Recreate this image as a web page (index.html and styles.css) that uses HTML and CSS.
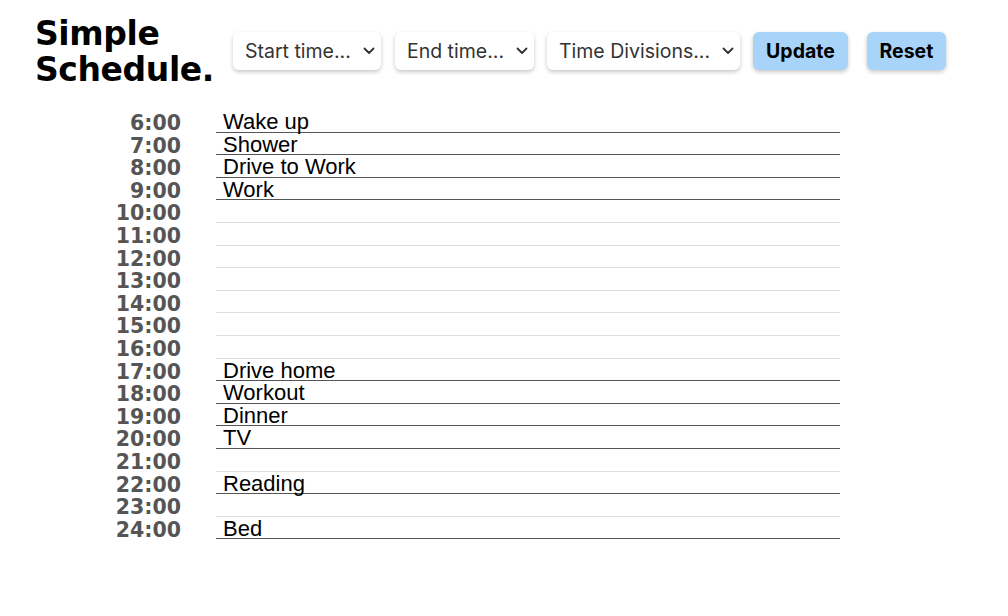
FILE: index.html
```html
<!DOCTYPE html>
<html lang="en">
<head>
<meta charset="utf-8">
<title>Simple Schedule</title>
<link rel="stylesheet" href="styles.css">
</head>
<body>
<header class="header">
  <h1 class="title">Simple<br>Schedule.</h1>
  <div class="controls">
    <button class="select select-start" type="button"><span>Start time...</span><svg class="chev" viewBox="0 0 12 8" width="12" height="8"><path d="M1.5 1.5 L6 6 L10.5 1.5" fill="none" stroke="#333" stroke-width="1.8" stroke-linecap="round" stroke-linejoin="round"/></svg></button>
    <button class="select select-end" type="button"><span>End time...</span><svg class="chev" viewBox="0 0 12 8" width="12" height="8"><path d="M1.5 1.5 L6 6 L10.5 1.5" fill="none" stroke="#333" stroke-width="1.8" stroke-linecap="round" stroke-linejoin="round"/></svg></button>
    <button class="select select-div" type="button"><span>Time Divisions...</span><svg class="chev" viewBox="0 0 12 8" width="12" height="8"><path d="M1.5 1.5 L6 6 L10.5 1.5" fill="none" stroke="#333" stroke-width="1.8" stroke-linecap="round" stroke-linejoin="round"/></svg></button>
    <button class="btn btn-update" type="button">Update</button>
    <button class="btn btn-reset" type="button">Reset</button>
  </div>
</header>
<main class="schedule">
  <div class="time">6:00</div><div class="event filled">Wake up</div>
  <div class="time">7:00</div><div class="event filled">Shower</div>
  <div class="time">8:00</div><div class="event filled">Drive to Work</div>
  <div class="time">9:00</div><div class="event filled">Work</div>
  <div class="time">10:00</div><div class="event"></div>
  <div class="time">11:00</div><div class="event"></div>
  <div class="time">12:00</div><div class="event"></div>
  <div class="time">13:00</div><div class="event"></div>
  <div class="time">14:00</div><div class="event"></div>
  <div class="time">15:00</div><div class="event"></div>
  <div class="time">16:00</div><div class="event"></div>
  <div class="time">17:00</div><div class="event filled">Drive home</div>
  <div class="time">18:00</div><div class="event filled">Workout</div>
  <div class="time">19:00</div><div class="event filled">Dinner</div>
  <div class="time">20:00</div><div class="event filled">TV</div>
  <div class="time">21:00</div><div class="event"></div>
  <div class="time">22:00</div><div class="event filled">Reading</div>
  <div class="time">23:00</div><div class="event"></div>
  <div class="time">24:00</div><div class="event filled">Bed</div>
</main>
</body>
</html>
```
FILE: styles.css
```css
html, body {
  margin: 0;
  padding: 0;
  background: #fff;
}

body {
  font-family: "Liberation Sans", Arial, sans-serif;
  color: #000;
}

.header {
  display: flex;
  align-items: center;
  padding: 16px 0 0 35px;
  gap: 19px;
}

.title {
  margin: 0;
  font-family: "DejaVu Sans", sans-serif;
  font-weight: 700;
  font-size: 33px;
  line-height: 36px;
  letter-spacing: -0.4px;
  color: #000;
}

.controls {
  display: flex;
  align-items: center;
  margin-top: -3px;
}

.select,
.btn {
  height: 38px;
  border: none;
  border-radius: 6px;
  box-shadow: 0 2px 4px rgba(0, 0, 0, 0.22);
  font-family: "Inter", sans-serif;
  font-size: 19.5px;
  padding: 0 12px;
  cursor: pointer;
}

.select {
  display: flex;
  align-items: center;
  justify-content: space-between;
  background: #fff;
  color: #333;
  margin-right: 14px;
}

.select-start { width: 148px; }
.select-end { width: 139px; margin-right: 13px; }
.select-div { width: 193px; margin-right: 13px; }

.chev {
  flex: none;
  margin-right: -6px;
}

.btn {
  background: #a9d4f9;
  color: #000;
  font-weight: 700;
  padding: 0;
}

.btn-update { width: 95px; margin-right: 19px; }
.btn-reset { width: 79px; }

.schedule {
  display: grid;
  grid-template-columns: 81px 624px;
  grid-auto-rows: 22.6px;
  column-gap: 35px;
  padding: 22px 0 0 100px;
}

.time {
  text-align: right;
  font-family: "DejaVu Sans", sans-serif;
  font-weight: 700;
  font-size: 20.5px;
  line-height: 27px;
  color: #555;
}

.event {
  box-sizing: border-box;
  border-bottom: 1px solid #ddd;
  padding-left: 7px;
  font-size: 22px;
  line-height: 24px;
  white-space: nowrap;
}

.event.filled {
  border-bottom-color: #555;
}
```
